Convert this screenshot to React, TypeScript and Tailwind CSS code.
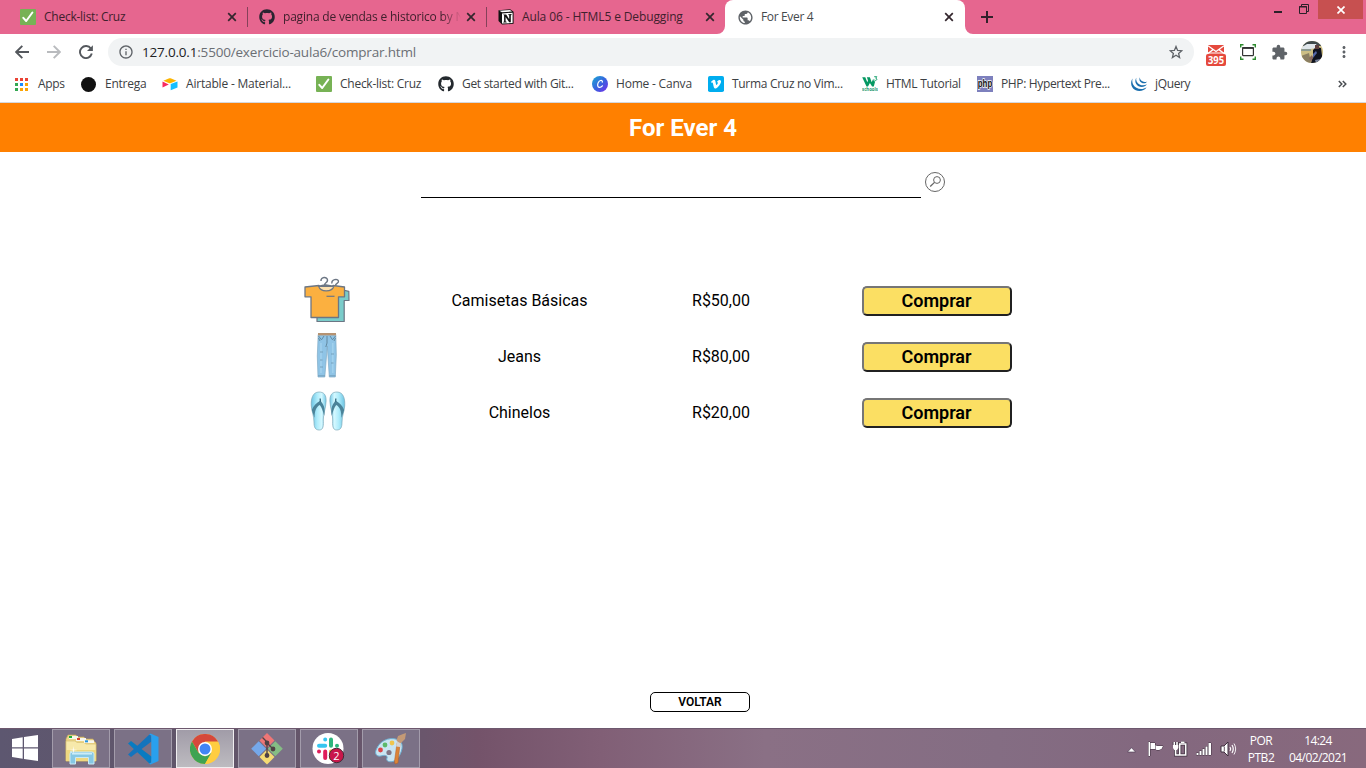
import React from "react";
import { FaGithub } from "react-icons/fa";
import { MdExtension, MdPublic, MdInfoOutline, MdMoreVert } from "react-icons/md";

const Check = () => (
  <svg width="16" height="16" viewBox="0 0 16 16">
    <rect width="16" height="16" rx="1" fill="#77b255" />
    <path d="M3.3 8.8 6.2 12 12.4 3.5" fill="none" stroke="#fff" strokeWidth="2" strokeLinecap="round" strokeLinejoin="round" />
  </svg>
);

const Close = () => (
  <svg width="10" height="10" viewBox="0 0 10 10">
    <path d="M1.2 1.2 8.8 8.8M8.8 1.2 1.2 8.8" stroke="#33262d" strokeWidth="1.7" />
  </svg>
);

const Notion = () => (
  <svg width="16" height="16" viewBox="0 0 16 16">
    <path d="M.5 1.2 12.2.3 15.6 2.8V14.7L4 15.6.5 12Z" fill="#111" />
    <path d="M1.3 1.8 12 1 14 2.5 4 3.2Z" fill="#fff" />
    <path d="M4 4.4 14.6 3.7V14L4 14.6Z" fill="#fff" />
    <path d="M5.2 5.5H8.2L11.2 10.2V6.3L10.3 6V5.3L13.5 5.1V5.9L12.8 6.3V13.3H11.2L7.6 8V12.5L8.6 12.8V13.4L5.3 13.6V12.9L6.1 12.5V6.4Z" fill="#111" />
  </svg>
);

function Tab({ icon, title, active, divider, fade, cls }: { icon: React.ReactNode; title: string; active?: boolean; divider?: boolean; fade?: boolean; cls: string }) {
  return (
    <div className={"relative flex h-[34px] shrink-0 items-center pl-3 " + (active ? "w-60 rounded-t-lg bg-white" : "w-[239px]")}>
      <span className="flex w-4 shrink-0 justify-center">{icon}</span>
      <span
        className={
          "ml-2 w-[178px] overflow-hidden whitespace-nowrap text-[12px] leading-[18px] " + cls + " " +
          (active ? "text-[#45494d]" : "text-[#40202d]") +
          (fade ? " [mask-image:linear-gradient(to_right,black_89%,transparent_100%)]" : "")
        }
      >
        {title}
      </span>
      <span className="ml-[5px] flex"><Close /></span>
      {divider && <span className="absolute right-[-1px] top-[7px] h-5 w-px bg-[#85415a]" />}
      {active && (
        <>
          <svg className="absolute bottom-0 -left-2" width="8" height="8"><path d="M8 0V8H0A8 8 0 0 0 8 0Z" fill="#fff" /></svg>
          <svg className="absolute bottom-0 -right-2" width="8" height="8"><path d="M0 0V8H8A8 8 0 0 1 0 0Z" fill="#fff" /></svg>
        </>
      )}
    </div>
  );
}

const AppsGrid = () => {
  const c = ["#ea4335", "#ea4335", "#ea4335", "#34a853", "#1a8cff", "#fba404", "#34a853", "#fba404", "#fba404"];
  return (
    <svg width="13" height="13">
      {c.map((f, i) => <rect key={i} x={(i % 3) * 5} y={Math.floor(i / 3) * 5} width="3" height="3" fill={f} />)}
    </svg>
  );
};
const Airtable = () => (
  <svg width="16" height="16" viewBox="0 0 16 16">
    <path d="M1.3 4.7 7.3 2.3 8.6 2.3 14.5 4.7 8.3 7.2 7.3 7.2Z" fill="#fcb400" />
    <path d="M8.7 8 15.5 5.4V11.5L8.7 14.2Z" fill="#18bfff" />
    <path d="M.5 5.6 6.8 8.4.5 11.5Z" fill="#f82b60" />
  </svg>
);
const Canva = () => (
  <svg width="16" height="16" viewBox="0 0 16 16">
    <defs><linearGradient id="cv" x1="0" y1="0" x2="1" y2="1"><stop offset="0" stopColor="#18a9d2" /><stop offset=".55" stopColor="#3b5ee0" /><stop offset="1" stopColor="#7a2be8" /></linearGradient></defs>
    <circle cx="8" cy="8" r="8" fill="url(#cv)" />
    <path d="M10.3 6.1C10.7 4.9 9.7 4.2 8.6 4.5 6.7 5.1 5.4 7.6 5.7 9.6 6 11.8 8.6 12 10.4 9.8" fill="none" stroke="#fff" strokeWidth="1.2" strokeLinecap="round" />
  </svg>
);
const Vimeo = () => (
  <svg width="16" height="16" viewBox="0 0 16 16">
    <rect width="16" height="16" rx="1.8" fill="#00adef" />
    <path d="M3 5.8C4 4.9 5 3.8 5.9 3.7 6.9 3.6 7.3 4.4 7.5 5.7 7.8 7.5 8.1 9.1 8.5 9.1 8.9 9.1 10.1 7.3 9.9 6.6 9.7 6.2 9.2 6.3 8.8 6.5 9.3 4.8 10.3 3.8 11.7 3.9 12.8 4 13.2 4.8 13 5.9 12.6 8.4 9 12.5 7.2 12.5 5.9 12.5 5.6 10.4 5.2 8.5 4.9 7.2 4.8 6.4 4.3 6.4L3.4 6.8Z" fill="#fff" />
  </svg>
);
const W3 = () => (
  <svg width="16" height="16" viewBox="0 0 16 16">
    <path d="M.2 1.2H3.3L5.3 6.3 6 4.6 4.9 1.2H7.9L9.7 6.2 11.2 2.8 12 5.2H13.2L11.8 10.4H10.1L7.9 6.9 6 10.4H4.5Z" fill="#059862" />
    <path d="M12.2.7H14.8L13.7 2.2C15.4 2.3 15.2 4.6 13.2 4.4L12.3 4" fill="none" stroke="#059862" strokeWidth=".9" />
    <text x="0" y="15.4" fontSize="4.6" fontWeight="700" fill="#2a9a70" textLength="16" lengthAdjust="spacingAndGlyphs" fontFamily="Open Sans">schools</text>
  </svg>
);
const Php = () => (
  <svg className="overflow-visible" width="16" height="16" viewBox="0 0 16 16">
    <rect width="16" height="16" fill="#7d80bd" />
    <text x=".8" y="11" fontSize="10" fontWeight="700" fill="#111" stroke="#fff" strokeWidth="1.3" paintOrder="stroke" textLength="14.4" lengthAdjust="spacingAndGlyphs" fontFamily="Liberation Sans">php</text>
  </svg>
);
const JQ = () => (
  <svg width="17" height="16" viewBox="0 0 17 16" fill="#1b6fae">
    <path d="M1.6 2.6C-1 6.4-.2 11.6 4.2 14 8.4 16.2 13.4 14.8 15.6 11.2 12.4 13.6 8.4 13.4 5.4 11.8 1.9 9.8.6 6.4 1.6 2.6Z" />
    <path d="M5.3 1.8C3.4 4.9 4.4 8.6 7.6 10.2 10.7 11.8 14.2 10.8 15.9 8.2 13.5 9.7 10.8 9.6 8.6 8.4 5.9 7 4.7 4.7 5.3 1.8Z" />
    <path d="M9 1.2C7.8 3.3 8.5 5.7 10.7 6.8 12.8 7.9 15 7.2 16.2 5.4 14.5 6.3 12.8 6.2 11.4 5.3 9.6 4.3 8.7 3 9 1.2Z" />
  </svg>
);

const marks: { w: string; icon: React.ReactNode; t: string; c: string; g: string }[] = [
  { w: "w-[66px]", icon: <AppsGrid />, t: "Apps", c: "tracking-[-0.3px]", g: "w-[23px]" },
  { w: "w-[81px]", icon: <span className="size-[15px] rounded-full bg-[#111]" />, t: "Entrega", c: "tracking-[-0.25px]", g: "w-6" },
  { w: "w-[154px]", icon: <Airtable />, t: "Airtable - Material...", c: "tracking-[-0.2px]", g: "w-6" },
  { w: "w-[122px]", icon: <Check />, t: "Check-list: Cruz", c: "tracking-[-0.26px]", g: "w-6" },
  { w: "w-[154px]", icon: <FaGithub size={16} color="#24292e" />, t: "Get started with Git...", c: "tracking-[-0.3px]", g: "w-6" },
  { w: "w-[116px]", icon: <Canva />, t: "Home - Canva", c: "tracking-[-0.2px]", g: "w-6" },
  { w: "w-[154px]", icon: <Vimeo />, t: "Turma Cruz no Vim...", c: "tracking-[-0.3px]", g: "w-6" },
  { w: "w-[115px]", icon: <W3 />, t: "HTML Tutorial", c: "tracking-[-0.3px]", g: "w-6" },
  { w: "w-[154px]", icon: <Php />, t: "PHP: Hypertext Pre...", c: "tracking-[-0.36px]", g: "w-6" },
  { w: "w-[80px]", icon: <JQ />, t: "jQuery", c: "tracking-[-0.35px]", g: "w-6" },
];

function Browser() {
  return (
    <div className="h-[103px] shrink-0 border-b border-[#d5d8dc] bg-white font-['Open_Sans','Noto_Sans',sans-serif]">
      <div className="flex h-[34px] bg-[#e6668f] pl-2">
        <Tab icon={<Check />} title="Check-list: Cruz" divider cls="tracking-[-0.25px]" />
        <Tab icon={<FaGithub size={16} color="#2b2430" />} title="pagina de vendas e historico by N" divider fade cls="tracking-[-0.2px]" />
        <Tab icon={<Notion />} title="Aula 06 - HTML5 e Debugging" cls="tracking-[-0.12px]" />
        <Tab icon={<MdPublic size={17} color="#5f6368" className="shrink-0" />} title="For Ever 4" active cls="tracking-[-0.35px]" />
        <svg className="ml-4 mt-[11px]" width="12" height="12"><path d="M6 0V12M0 6H12" stroke="#33202a" strokeWidth="2" /></svg>
        <div className="ml-auto mr-[3px] flex h-[19px] items-start">
          <svg className="mr-[17px] mt-[11px]" width="8" height="2"><rect width="8" height="2" fill="#2b2029" /></svg>
          <svg className="mr-[9px] mt-1" width="10" height="10" fill="none" stroke="#2b2029"><path d="M.5 2.5H7.5V9.5H.5ZM0 3H8M2.5 2V.5H9.5V7.5H8" /></svg>
          <div className="flex h-[19px] w-[45px] items-center justify-center bg-[#c75050]">
            <svg width="8" height="8"><path d="M.5.5 7.5 7.5M7.5.5.5 7.5" stroke="#fff" strokeWidth="1.7" /></svg>
          </div>
        </div>
      </div>
      <div className="flex h-9 items-center pl-[15px]">
        <svg className="mr-[18px]" width="14" height="14" fill="none" stroke="#54585d" strokeWidth="1.9"><path d="M14 7H1.5M7.3.8 1.2 7 7.3 13.2" /></svg>
        <svg className="mr-[18px]" width="14" height="14" fill="none" stroke="#b9bbbe" strokeWidth="1.9"><path d="M0 7H12.5M6.7.8 12.8 7 6.7 13.2" /></svg>
        <svg className="mr-[15px]" width="14" height="14" fill="none"><path d="M11.9 3.6A6 6 0 1 0 12.8 8.6" stroke="#54585d" strokeWidth="1.9" /><path d="M13.9.2V6.1H8Z" fill="#54585d" /></svg>
        <div className="flex h-7 w-[1086px] items-center rounded-full bg-[#f1f3f4] pl-[10px] pr-[11px]">
          <MdInfoOutline size={16} color="#5f6368" />
          <span className="ml-2 text-[13.5px] tracking-[-0.19px] text-[#6b6f74]"><span className="text-[#202124]">127.0.0.1</span>:5500/exercicio-aula6/comprar.html</span>
          <svg className="ml-auto" width="14" height="14" fill="none"><path d="m7 1.5 1.6 3.9 4.2.3-3.2 2.7 1 4.1L7 10.3l-3.6 2.2 1-4.1L1.2 5.7l4.2-.3Z" stroke="#5f6368" strokeWidth="1.3" /></svg>
        </div>
        <svg className="ml-[12px] mt-[7px]" width="20" height="21" viewBox="0 0 20 21">
          <path d="M2 0H18V10H2Z" fill="#e5493d" /><path d="M2 .8 10 6.5 18 .8M2 8.5 7 4.6M18 8.5 13 4.6" fill="none" stroke="#fff" strokeWidth="1.4" />
          <path d="M0 8H20" stroke="#fff" strokeWidth="1" />
          <rect y="9" width="20" height="12" rx="2" fill="#e5493d" />
          <text x="10" y="18.8" textAnchor="middle" fontSize="10" fontWeight="700" fill="#fff" textLength="16" lengthAdjust="spacingAndGlyphs" fontFamily="Open Sans">395</text>
        </svg>
        <svg className="ml-[14px]" width="16" height="16" viewBox="0 0 16 16" fill="none">
          <path d="M.7 3.5V.8H3.5M12.5.8H15.3V3.5M15.3 12.5V15.2H12.5M3.5 15.2H.7V12.5" stroke="#2d8b2e" strokeWidth="1.4" />
          <rect x="2.6" y="3.6" width="10.8" height="8" rx=".5" stroke="#333" strokeWidth="1.2" /><path d="M2.5 4H13.5" stroke="#333" strokeWidth="1.8" />
        </svg>
        <MdExtension size={17} color="#5f6368" className="ml-[15px]" />
        <svg className="ml-[13px]" width="22" height="22" viewBox="0 0 22 22">
          <defs><clipPath id="av"><circle cx="11" cy="11" r="11" /></clipPath></defs>
          <g clipPath="url(#av)">
            <rect width="22" height="22" fill="#cdbf85" />
            <path d="M0 0H22V5H0Z" fill="#3f4a4c" /><path d="M1 6 6 3 15 3 17 7 9 8H0Z" fill="#dfe6ea" /><path d="M0 8H10V10H0Z" fill="#8d9a90" />
            <path d="M12 9 15 6 20 7 22 22H10L12 15Z" fill="#10131f" /><path d="M14 4H18V8H14Z" fill="#5c3f3d" /><path d="M0 15 8 12 10 22H3Z" fill="#8b7f62" />
            <path d="m12 13 3-3 1 2-4 5Z" fill="#5265a6" /><path d="m8 17 3-3 1 3-2 4Z" fill="#8a6a5f" /><path d="m14 19 5-1 1 4h-5Z" fill="#75809a" />
          </g>
        </svg>
        <MdMoreVert size={18} color="#5f6368" className="ml-[12px]" />
      </div>
      <div className="flex h-7 items-center pl-[15px]">
        {marks.map((m) => (
          <div key={m.t} className={"flex shrink-0 items-center whitespace-nowrap text-[12px] text-[#3c4043] " + m.w}>
            <span className={"flex shrink-0 " + m.g}>{m.icon}</span>
            <span className={m.c}>{m.t}</span>
          </div>
        ))}
        <svg className="ml-auto mr-[19px]" width="9" height="8" fill="none" stroke="#4a4e52" strokeWidth="1.5"><path d="m.8 1 3 3-3 3M4.8 1l3 3-3 3" /></svg>
      </div>
    </div>
  );
}

const Shirts = () => (
  <svg width="50" height="50" viewBox="0 0 50 50" strokeLinejoin="round">
    <path d="M30 7.5C29 3.5 35.8 2 36.5 5.2 36.9 7.2 33.5 7.5 33.5 9.5V11" fill="none" stroke="#6c7684" strokeWidth="1.4" />
    <path d="M41 14 46.8 15.3 47 24.5H42.2V45.5H15V41" fill="#7accca" stroke="#6c7684" strokeWidth="1.2" />
    <path d="M3 11 17 9.5C20 14 28 14 31 9.5L42.5 11V20.8H36.5V41.5H9V20.8H3Z" fill="#fbb040" stroke="#6c7684" strokeWidth="1.3" />
    <path d="M16.5 10C18.5 16.5 30 16.5 32 10" fill="#fde0ae" stroke="#6c7684" strokeWidth="1.1" />
    <path d="M19 5C18.5 .8 25.5 .3 25.5 4.2 25.5 6.8 22.5 6.7 22.5 9L17 10.3H31L22.5 8.8" fill="none" stroke="#6c7684" strokeWidth="1.5" />
    <path d="M24.5 20.3H32.5" stroke="#6c7684" strokeWidth="1.2" />
  </svg>
);
const Jeans = () => (
  <svg width="50" height="50" viewBox="0 0 50 50">
    <path d="M16.2 2.5H33.8L34.3 23 33.3 45H27.3L25.3 14 22.8 45H16L15.3 24Z" fill="#8fc4e6" stroke="#7fabc6" strokeWidth=".7" />
    <path d="M16 1H34V3.4H16Z" fill="#b69372" />
    <path d="M16.5 4 19.5 7.8 22 4M33.5 4 30.5 7.8 28 4M16.5 6 18 9M33.5 6 32 9M25 4V11L23.8 15" fill="none" stroke="#5c8299" strokeWidth=".9" />
    <path d="M19 11V41M30.8 11V41" stroke="#a3d2ee" strokeWidth="1.4" />
    <path d="M18 20H21M29 22H32M18 28H20.5M29 31H31.5M18 35H21M16 43.8H23M27.3 43.8H33.5" stroke="#6d97b1" strokeWidth=".8" />
  </svg>
);
const Sandal = ({ flip }: { flip?: boolean }) => (
  <g transform={flip ? "translate(52 0) scale(-1 1)" : undefined}>
    <path d="M17 4C10.5 4 8.8 11 9.3 18 9.9 24 12 28 12 34 12 39 13 42 17.3 42 21.6 42 21.5 37 21.3 32 21.1 26 23.9 20 24.1 13 24.3 7 22 4 17 4Z" fill="url(#sd)" stroke="#7ba7b8" strokeWidth=".7" />
    <path d="M9.8 22C11.5 17.5 14.5 15 18.2 12.8 21.8 16.5 23.3 19.5 22.3 28 20.8 23 20 19.5 17.8 16.9 14 18.9 12.5 23 12.6 30Z" fill="#4b8399" />
    <path d="m18.2 10.5 .2 3.5" stroke="#3d7186" strokeWidth="1.4" />
  </g>
);
const Sandals = () => (
  <svg width="50" height="50" viewBox="0 0 50 50">
    <defs><linearGradient id="sd"><stop offset="0" stopColor="#6cc3e2" /><stop offset=".4" stopColor="#aeecfb" /><stop offset=".7" stopColor="#d4f8ff" /><stop offset="1" stopColor="#74cae8" /></linearGradient></defs>
    <Sandal /><Sandal flip />
  </svg>
);

const products = [
  { icon: <Shirts />, name: "Camisetas Básicas", price: "R$50,00" },
  { icon: <Jeans />, name: "Jeans", price: "R$80,00" },
  { icon: <Sandals />, name: "Chinelos", price: "R$20,00" },
];

function Page() {
  return (
    <main className="flex h-[625px] flex-col bg-white font-['Roboto',sans-serif] text-black">
      <header className="flex h-[49px] shrink-0 items-center justify-center bg-[#ff8000] text-2xl font-bold text-white">For Ever 4</header>
      <div className="ml-[421px] mt-5 flex h-[26px]">
        <div className="w-[500px] border-b border-black" />
        <svg className="ml-1" width="20" height="20" fill="none" stroke="#666">
          <circle cx="10" cy="10" r="9.5" /><circle cx="12" cy="8" r="3.4" /><path d="M9.5 10.4 5.2 14.5" strokeWidth="1.3" />
        </svg>
      </div>
      <div className="ml-[302px] mt-[78px] flex flex-col gap-1.5">
        {products.map((p) => (
          <div key={p.name} className="grid h-[50px] w-[710px] grid-cols-[50px_335px_68px_257px] items-center text-center">
            {p.icon}
            <span>{p.name}</span>
            <span className="whitespace-nowrap">{p.price}</span>
            <button className="h-[30px] w-[150px] justify-self-end rounded-[5px] border-2 border-t-[#767676] border-l-[#767676] border-r-[#212121] border-b-[#212121] bg-[#fbdf63] pr-px text-lg leading-none font-semibold">Comprar</button>
          </div>
        ))}
      </div>
      <button className="mt-auto mb-4 ml-[650px] h-5 w-[100px] rounded-[5px] border border-black text-xs leading-none font-semibold">VOLTAR</button>
    </main>
  );
}

const Explorer = () => (
  <svg width="34" height="32" viewBox="0 0 34 32">
    <path d="M3 4 4 2H12L13 4H20L21 6H29L30 8 32 10V28H2V6Z" fill="#ecd588" stroke="#c9ab5c" strokeWidth=".6" />
    <path d="M2 8H11L13 9.5H20L22 11H32V28H2Z" fill="#f7e9ab" stroke="#d4bd6d" strokeWidth=".6" />
    <path d="M5 3H14V6H5Z" fill="#f7f7ee" /><path d="M5 3H8V5H5Z" fill="#1fae3a" />
    <path d="M12 5H22V8H12Z" fill="#f7f7ee" /><path d="M13 5H16V7H13Z" fill="#d8402e" />
    <path d="M20 7.3H30V10H20Z" fill="#f7f7ee" /><path d="M21 7.3H24V9.3H21Z" fill="#2795dd" />
    <path d="M2 17H32V28H2Z" fill="#eed880" />
    <path d="M6 19H28Q30 19 30 21V31H24.5V24.5H11.5V31H6V21Q6 19 8 19Z" fill="#86c8e4" stroke="#c9eaf6" strokeWidth="1" />
    <path d="M8 20.8H28" stroke="#d3f0fa" strokeWidth="1.4" />
    <path d="M9.5 13 10 16.5 13.5 17 10 17.5 9.5 21 9 17.5 5.5 17 9 16.5Z" fill="#fff" opacity=".9" />
  </svg>
);
const VSCode = () => (
  <svg width="32" height="32" viewBox="0 0 32 32">
    <path d="M1 10.5 4 8 25 24 23.5 31.5Z" fill="#087bc1" />
    <path d="M1 21.5 23.5.5 24.5 8.5 4 24Z" fill="#1474bd" />
    <path d="M23.5.5 31.5 4V28L23.5 31.5 22 30.5 24.3 29.5V2.5L22 1.5Z" fill="#29a0ee" />
  </svg>
);
const Chrome = () => (
  <svg width="30" height="30" viewBox="0 0 48 48">
    <circle cx="24" cy="24" r="24" fill="#ffcd40" />
    <path d="M3.2 12A24 24 0 0 1 44.8 12H24L13.6 30Z" fill="#d5483b" />
    <path d="M3.2 12 13.6 30 24 36 34.4 30 24 48A24 24 0 0 1 3.2 12Z" fill="#3fa352" />
    <path d="M24 13H45.3A24 24 0 0 1 24 48L34.4 30Z" fill="#ffcd40" />
    <circle cx="24" cy="24" r="11.2" fill="#fff" /><circle cx="24" cy="24" r="8.8" fill="#4285f4" />
  </svg>
);
const Git = () => (
  <svg width="32" height="32" viewBox="0 0 32 32">
    <path d="m16 0 7.5 7.5L16 15 8.5 7.5Z" fill="#ef7676" /><path d="m24.3 8.3 7.5 7.5-7.5 7.5-7.5-7.5Z" fill="#85bd84" />
    <path d="m7.7 8.3 7.5 7.5-7.5 7.5-7.5-7.5Z" fill="#75a8ea" /><path d="m16 16.6 7.5 7.5L16 31.6 8.5 24.1Z" fill="#f5db73" />
    <g stroke="#504245" strokeWidth="1.4" fill="#504245"><path d="M11.5 4.5 16 9V22M16 10 22 16" fill="none" /><circle cx="16" cy="10" r="1.7" /><circle cx="16" cy="22.5" r="1.7" /><circle cx="22" cy="16" r="1.7" /></g>
  </svg>
);
const Slack = () => (
  <svg width="34" height="32" viewBox="0 0 34 32">
    <circle cx="16" cy="15.5" r="15.5" fill="#fff" />
    <g strokeWidth="4" strokeLinecap="round"><path d="M13.2 6.4V6.5M7 12.7H13.2" stroke="#36c5f0" /><path d="M19 6.5V12.7M25 12.7V12.8" stroke="#2eb67d" /><path d="M7 18.5V18.6M13.2 18.5V25" stroke="#e01e5a" /><path d="M19 25V25.1M19 18.5H25" stroke="#ecb22e" /></g>
    <circle cx="24.5" cy="22.5" r="7.2" fill="#c9164b" stroke="#432a36" /><text x="24.5" y="26.5" fontSize="11" textAnchor="middle" fill="#fff" fontFamily="Open Sans">2</text>
  </svg>
);
const Paint = () => (
  <svg width="34" height="32" viewBox="0 0 34 32">
    <path d="M3 15C7 6 19 3 26 8 30 12 28 19 24 25 19 31 11 29 13 25 14 22 10 22 7 23 2 24 0 20 3 15Z" fill="#c9e5f2" stroke="#6cadd0" strokeWidth="1" />
    <circle cx="6.5" cy="17" r="2.4" fill="#dc4547" /><circle cx="11" cy="12" r="2.4" fill="#5bb96b" /><circle cx="18" cy="10" r="2.4" fill="#f0c54c" /><circle cx="15" cy="19.5" r="2.6" fill="#817585" />
    <path d="M23 10 26 11 24 30 21 31 20.5 28Z" fill="#dc8437" stroke="#ad5d2b" strokeWidth=".5" /><path d="M22.5 7.5 24 3 29 1 32 0 31 6 26 11Z" fill="#c49a76" /><path d="m22.6 9 4 1-.5 4-4-.5Z" fill="#d6d4d2" />
  </svg>
);

function Taskbar() {
  const apps = [<Explorer />, <VSCode />, <Chrome />, <Git />, <Slack />, <Paint />];
  return (
    <div className="flex h-10 items-center border-t border-[#6d586e] bg-[linear-gradient(to_right,#5d5770_0%,#615569_15%,#6a566c_31%,#74536a_35%,#815f76_44%,#8a7085_56%,#846d83_73%,#83687f_84%,#88697d_100%)] font-['Open_Sans','Noto_Sans',sans-serif] text-white">
      <svg className="ml-3 -mt-0.5" width="26" height="26" fill="#fff"><path d="M0 4 10.7 2.3V12.3H0ZM12 2.1 26 0V12.3H12ZM0 13.6H10.7V23.7L0 22ZM12 13.6H26V26L12 24Z" /></svg>
      <div className="ml-3.5 flex gap-1">
        {apps.map((icon, i) => (
          <div key={i} className={"flex h-[39px] w-[58px] items-center justify-center border " + (i === 2 ? "border-[#f0eef0] bg-[linear-gradient(#a19ca8,#bdbbc0)]" : "border-[#a39cab] bg-[#7b7186]")}>{icon}</div>
        ))}
      </div>
      <svg className="ml-auto mr-[11px] mt-0.5" width="9" height="6"><path d="M.5 5 4.5.7 8.5 5Z" fill="#fff" stroke="#45334a" strokeWidth=".6" /></svg>
      <svg className="mr-2" width="17" height="16" fill="#fff" stroke="#3f2f3e" strokeWidth="1" paintOrder="stroke"><path d="M1.5 1H3V15H1.5ZM3.5 2 8 2V8H3.5ZM8.5 4 10 5H16L14.5 8 12 9H9.5L8.5 8Z" /></svg>
      <svg className="mr-2" width="16" height="16" fill="none">
        <g stroke="#3f2f3e" strokeWidth="3.2"><path d="M7.7 3H13.7V14H7.7ZM9 1.2H12.5M2.3 1V4M5 1V4M3.6 5V14H7" /></g>
        <g stroke="#fff" strokeWidth="1.6"><path d="M7.7 3H13.7V14H7.7ZM9 1.3H12.5M2.3 1V4M5 1V4M3.6 5V14H7" /></g><path d="M1 4H6.3V7L5 9H2.4L1 7Z" fill="#fff" />
      </svg>
      <svg className="mr-2" width="16" height="14" fill="#fff" stroke="#3f2f3e" strokeWidth="1" paintOrder="stroke"><path d="M.5 11H2.5V13H.5ZM3.5 9H5.5V13H3.5ZM6.5 7H8.5V13H6.5ZM9.5 4.5H11.5V13H9.5ZM12.5 1H15V13H12.5Z" /></svg>
      <svg width="17" height="16" fill="none" stroke="#fff"><path d="M1 5H4L8 1V15L4 11H1Z" fill="#fff" stroke="#3f2f3e" /><path d="M4.3 5.5V10.5" stroke="#3f2f3e" strokeWidth=".8" /><path d="M10 6Q11.5 8 10 10M12 4Q14.5 8 12 12" strokeWidth="1.2" /><path d="M14 2.5Q17.3 8 14 13.5" strokeWidth=".9" /></svg>
      <div className="ml-[9px] flex w-[30px] flex-col items-center text-[12px] leading-[17px] tracking-[-0.45px]"><span>POR</span><span>PTB2</span></div>
      <div className="ml-3 mr-[18px] flex w-[60px] flex-col items-center text-[12px] leading-[17px] tracking-[-0.58px]"><span>14:24</span><span>04/02/2021</span></div>
    </div>
  );
}

export default function App() {
  return (
    <div className="flex h-[768px] w-[1366px] flex-col overflow-hidden">
      <Browser />
      <Page />
      <Taskbar />
    </div>
  );
}
